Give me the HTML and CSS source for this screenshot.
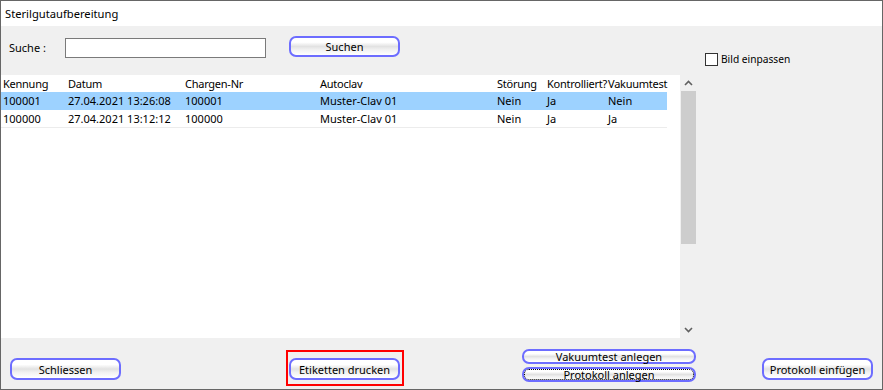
FILE: index.html
```html
<!DOCTYPE html>
<html lang="de">

<head>
    <meta charset="UTF-8">
    <title>Sterilgutaufbereitung</title>
    <link rel="stylesheet" href="styles.css">
</head>

<body>

    <div class="fenster">
        <div class="titel">Sterilgutaufbereitung</div>

        <div class="inhalt">
            <div class="suche">
                <label for="suchfeld">Suche :</label>
                <input type="text" id="suchfeld" class="suchfeld">
                <button class="knopf knopf-suchen">Suchen</button>
            </div>

            <div class="rechts">
                <label class="check"><span class="box"></span>Bild einpassen</label>
            </div>

            <div class="liste">
                <div class="tabelle">
                    <table>
                        <colgroup>
                            <col style="width:65px">
                            <col style="width:117px">
                            <col style="width:135px">
                            <col style="width:177px">
                            <col style="width:50px">
                            <col style="width:61px">
                            <col style="width:61px">
                        </colgroup>
                        <thead>
                            <tr>
                                <th>Kennung</th>
                                <th>Datum</th>
                                <th>Chargen-Nr</th>
                                <th>Autoclav</th>
                                <th>Störung</th>
                                <th>Kontrolliert?</th>
                                <th>Vakuumtest</th>
                            </tr>
                        </thead>
                        <tbody>
                            <tr class="valgt">
                                <td>100001</td>
                                <td>27.04.2021 13:26:08</td>
                                <td>100001</td>
                                <td>Muster-Clav 01</td>
                                <td>Nein</td>
                                <td>Ja</td>
                                <td>Nein</td>
                            </tr>
                            <tr>
                                <td>100000</td>
                                <td>27.04.2021 13:12:12</td>
                                <td>100000</td>
                                <td>Muster-Clav 01</td>
                                <td>Nein</td>
                                <td>Ja</td>
                                <td>Ja</td>
                            </tr>
                        </tbody>
                    </table>
                </div>
                <div class="scrollbar">
                    <svg class="pil" width="9" height="6" viewBox="0 0 9 6"><polyline points="1,5 4.5,1.5 8,5" fill="none" stroke="#606060" stroke-width="1.6"/></svg>
                    <div class="spor">
                        <div class="greb"></div>
                    </div>
                    <svg class="pil" width="9" height="6" viewBox="0 0 9 6"><polyline points="1,1 4.5,4.5 8,1" fill="none" stroke="#606060" stroke-width="1.6"/></svg>
                </div>
            </div>

            <div class="bund">
                <button class="knopf knopf-stor schliessen">Schliessen</button>
                <div class="markering">
                    <button class="knopf knopf-stor">Etiketten drucken</button>
                </div>
                <div class="stak">
                    <button class="knopf knopf-lille">Vakuumtest anlegen</button>
                    <button class="knopf knopf-lille fokus">Protokoll anlegen</button>
                </div>
                <button class="knopf knopf-stor einfuegen">Protokoll einfügen</button>
            </div>
        </div>
    </div>

</body>

</html>
```

FILE: styles.css
```css
body {
    margin: 0;
    background-color: white;
    font-family: "Noto Sans", "Open Sans", sans-serif;
    font-size: 11px;
    color: black;
}

.fenster {
    width: 881px;
    height: 388px;
    border: 1px solid #666666;
    display: flex;
    flex-direction: column;
    background-color: #f0f0f0;
}

.titel {
    height: 25px;
    line-height: 25px;
    padding-left: 4px;
    background-color: white;
    font-size: 11.2px;
}

.inhalt {
    flex: 1;
    display: grid;
    grid-template-columns: 696px 1fr;
    grid-template-rows: 49px 263px 1fr;
}

/* søgelinje */

.suche {
    display: flex;
    align-items: flex-start;
    padding-left: 8px;
}

.suche label {
    width: 56px;
    margin-top: 14px;
}

.suchfeld {
    width: 199px;
    height: 18px;
    padding: 0;
    margin: 12px 0 0 0;
    border: 1px solid #7a7a7a;
    background-color: white;
}

.knopf {
    font-family: "Noto Sans", "Open Sans", sans-serif;
    font-size: 11px;
    color: black;
    padding: 0;
    border: 2px solid #6d6dff;
    border-radius: 7px;
    background: linear-gradient(#ffffff 0%, #ffffff 25%, #e2e2e2 50%, #f2f2f2 70%, #ffffff 100%);
}

.knopf-suchen {
    width: 111px;
    height: 21px;
    margin-left: 23px;
    margin-top: 10px;
}

.rechts {
    grid-row: 1 / 3;
    grid-column: 2;
    padding-top: 26px;
    padding-left: 8px;
}

.check {
    display: flex;
    align-items: center;
    font-size: 10.2px;
}

.box {
    width: 11px;
    height: 11px;
    border: 1px solid #333333;
    background-color: white;
    margin-right: 3px;
}

/* liste */

.liste {
    display: flex;
    background-color: white;
}

.tabelle {
    width: 679px;
}

table {
    border-collapse: collapse;
    table-layout: fixed;
    width: 666px;
}

th,
td {
    text-align: left;
    font-weight: normal;
    padding: 0 0 0 2px;
    white-space: nowrap;
}

th {
    height: 17px;
    letter-spacing: -0.25px;
    overflow: visible;
}

td {
    height: 17px;
    border-bottom: 1px solid #ececec;
    overflow: hidden;
}

.valgt td {
    background-color: #9dd2ff;
    border-bottom-color: #9dd2ff;
}

.scrollbar {
    width: 17px;
    background-color: #f0f0f0;
    display: flex;
    flex-direction: column;
    align-items: center;
}

.pil {
    margin: 5px 0;
}

.spor {
    flex: 1;
    width: 100%;
}

.greb {
    width: 15px;
    height: 153px;
    margin-left: 1px;
    background-color: #cdcdcd;
}

/* knapper i bunden */

.bund {
    grid-column: 1 / 3;
    display: flex;
    align-items: flex-start;
}

.knopf-stor {
    width: 111px;
    height: 22px;
}

.schliessen {
    margin-left: 9px;
    margin-top: 20px;
}

.markering {
    border: 2px solid red;
    padding: 6px 2px 4px 1px;
    margin-left: 165px;
    margin-top: 12px;
    display: flex;
}

.stak {
    display: flex;
    flex-direction: column;
    gap: 3px;
    margin-left: 118px;
    margin-top: 11px;
}

.knopf-lille {
    width: 174px;
    height: 15px;
    line-height: 10px;
}

.fokus {
    outline: 1px dotted black;
    outline-offset: -3px;
}

.einfuegen {
    margin-left: 66px;
    margin-top: 20px;
}
```
